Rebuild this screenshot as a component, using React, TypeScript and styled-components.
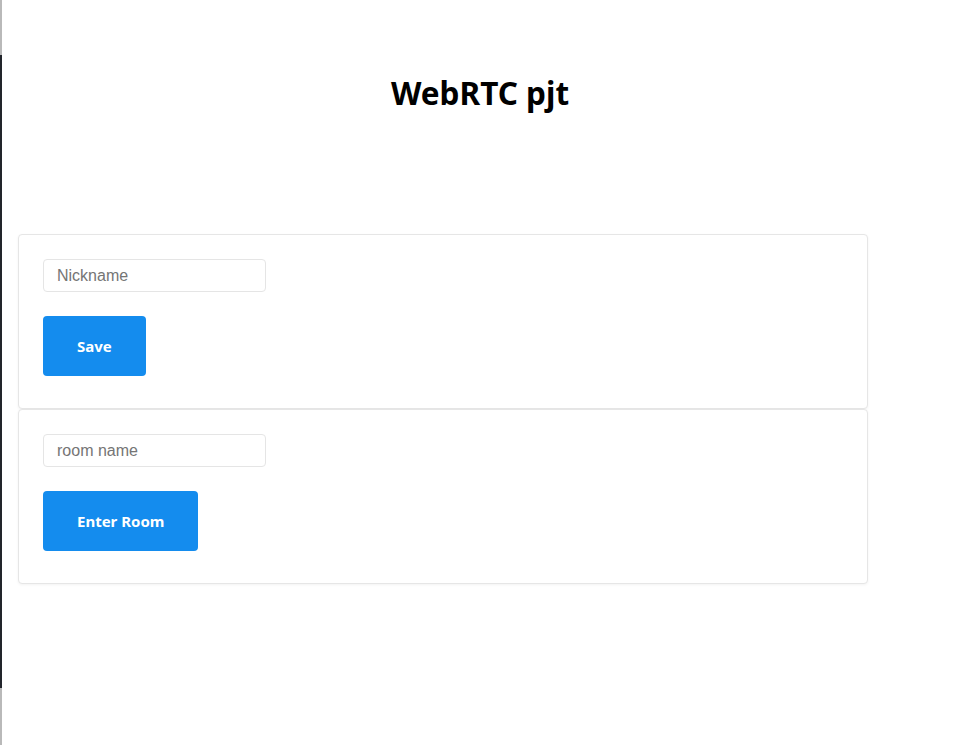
import React from "react";
import styled, { createGlobalStyle } from "styled-components";

const Global = createGlobalStyle`
  html, body { margin: 0; padding: 0; background: #ffffff; }
  body { font-family: "Noto Sans", "Open Sans", sans-serif; }
  * { box-sizing: border-box; }
`;

const Page = styled.div`
  display: flex;
  min-height: 745px;
`;

const EdgeStrip = styled.div`
  width: 2px;
  flex: 0 0 2px;
  background: linear-gradient(
    to bottom,
    #b9b9b9 0px,
    #b9b9b9 55px,
    #22252b 55px,
    #22252b 688px,
    #b9b9b9 688px
  );
`;

const Main = styled.main`
  flex: 1;
  padding: 0 90px 0 16px;
`;

const Title = styled.h1`
  margin: 69px 0 117px;
  text-align: center;
  font-family: "Noto Sans", sans-serif;
  font-weight: 700;
  font-size: 31.5px;
  line-height: 48px;
  color: #000;
  padding-left: 74px;
`;

const Card = styled.section`
  border: 1px solid #e6e6e6;
  border-radius: 4px;
  background: #fff;
  box-shadow: 0 1px 3px rgba(0, 0, 0, 0.05);
  padding: 24px 24px 32px;
  display: flex;
  flex-direction: column;
  align-items: flex-start;
  gap: 24px;
`;

const Input = styled.input`
  width: 223px;
  height: 33px;
  border: 1px solid #e5e5e5;
  border-radius: 4px;
  padding: 0 13px;
  font-family: "Liberation Sans", Arial, sans-serif;
  font-size: 16px;
  color: #333;
  outline: none;
  &::placeholder { color: #757575; }
`;

const Button = styled.button`
  height: 60px;
  padding: 0 34px;
  border: none;
  border-radius: 4px;
  background: #148cee;
  color: #fff;
  font-family: "Noto Sans", sans-serif;
  font-weight: 700;
  font-size: 15px;
  cursor: pointer;
`;

export default function App() {
  return (
    <>
      <Global />
      <Page>
        <EdgeStrip />
        <Main>
          <Title>WebRTC pjt</Title>
          <Card>
            <Input placeholder="Nickname" />
            <Button>Save</Button>
          </Card>
          <Card>
            <Input placeholder="room name" />
            <Button>Enter Room</Button>
          </Card>
        </Main>
      </Page>
    </>
  );
}
